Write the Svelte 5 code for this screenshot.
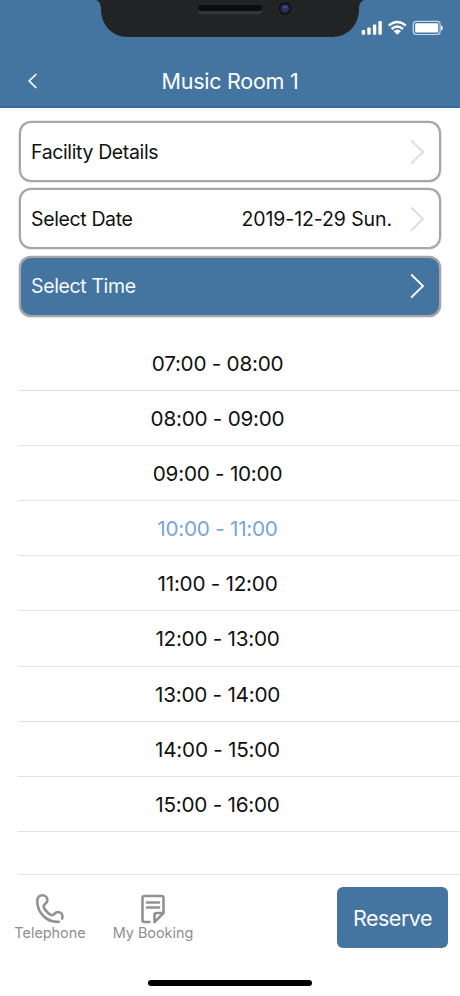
<script>
  let title = 'Music Room 1';
  let sections = [
    { key: 'details', label: 'Facility Details', value: '' },
    { key: 'date', label: 'Select Date', value: '2019-12-29 Sun.' },
    { key: 'time', label: 'Select Time', value: '' }
  ];
  let times = [
    '07:00 - 08:00',
    '08:00 - 09:00',
    '09:00 - 10:00',
    '10:00 - 11:00',
    '11:00 - 12:00',
    '12:00 - 13:00',
    '13:00 - 14:00',
    '14:00 - 15:00',
    '15:00 - 16:00'
  ];
  let activeSection = 'time';
  let selectedTime = '10:00 - 11:00';
</script>

<div class="phone">
  <header>
    <svg class="status" width="460" height="44" viewBox="0 0 460 44">
      <path d="M96 0C99 1 101 4 101 9C101 25 112 37 128 37H332C348 37 359 25 359 9C359 4 361 1 364 0Z" fill="#222324" />
      <rect x="198" y="5.5" width="64" height="9" rx="4" fill="#343536" />
      <rect x="198" y="5" width="64" height="6" rx="3" fill="#0c0d0f" />
      <circle cx="285" cy="9" r="8" fill="#2a2b2c" />
      <circle cx="285" cy="8.5" r="7" fill="#15161c" />
      <circle cx="285" cy="8.5" r="4" fill="#293160" />
      <path d="M282 7.5a3.5 3.5 0 0 1 6 0Z" fill="#4854a0" />
      <g fill="#fff">
        <rect x="361.7" y="30" width="3.4" height="4.7" rx="1" />
        <rect x="367.3" y="27.5" width="3.4" height="7.2" rx="1" />
        <rect x="372.9" y="24.5" width="3.4" height="10.2" rx="1" />
        <rect x="378.4" y="21" width="3.4" height="13.7" rx="1" />
        <path d="M393.6 31Q397.3 28 401 31L397.3 34.8Z" />
        <rect x="415.2" y="23.2" width="23" height="9.4" rx="1.2" />
        <path d="M441 25.5q1.8 .5 1.8 2.5t-1.8 2.5Z" />
      </g>
      <g fill="none" stroke="#fff">
        <path d="M388.8 25.6Q397.3 18.2 405.8 25.6M391.6 29Q397.3 24 403 29" stroke-width="2.4" />
        <rect x="413.3" y="21.3" width="26.8" height="13.2" rx="3" stroke="#c5dcf0" stroke-width="1.2" />
      </g>
    </svg>
    <div class="navbar">
      <button class="back" type="button" aria-label="Back">
        <svg width="10" height="16" viewBox="0 0 10 16"><path d="M8.3 1L1.2 8l7.1 7" /></svg>
      </button>
      <h1>{title}</h1>
    </div>
  </header>

  <main>
    <div class="sections">
      {#each sections as section}
        <button
          type="button"
          class="section {section.key}"
          class:active={activeSection === section.key}
          on:click={() => (activeSection = section.key)}
        >
          <span class="label">{section.label}</span>
          <span class="value">{section.value}</span>
          <svg width="15" height="26" viewBox="0 0 15 26"><path d="M1.2 1.5L13 13L1.2 24.5" /></svg>
        </button>
      {/each}
    </div>

    <ul>
      {#each times as time}
        <li class:selected={selectedTime === time}>
          <button type="button" on:click={() => (selectedTime = time)}>{time}</button>
        </li>
      {/each}
    </ul>
  </main>

  <footer>
    <button class="tool telephone" type="button">
      <svg width="30" height="30" viewBox="0 0 30 30">
        <path d="M23.8 27.8C11.5 28.6 2.2 18.5 2.2 6.8C2.2 3.5 4.3 1.3 7.3 1.3C10.4 1.3 12.4 3.4 12.4 6.2C12.4 9.4 8.6 9.9 8.6 12.3C8.8 15.2 14.6 21.2 17.2 21.3C19.3 21.3 19.4 18 22.9 18C26.2 18 28.4 21 27.2 24.6" />
      </svg>
      <span>Telephone</span>
    </button>
    <button class="tool booking" type="button">
      <svg width="24" height="29" viewBox="0 0 24 29">
        <path d="M8.5 27H3.5Q1.5 27 1.5 25V3Q1.5 1 3.5 1H20.5Q22.5 1 22.5 3V18.2L13.5 27.2V20Q13.5 18 15.5 18H22M6 7.5H18M6 12.5H18" />
      </svg>
      <span>My Booking</span>
    </button>
    <button class="reserve" type="button">Reserve</button>
  </footer>
  <div class="home"></div>
</div>

<style>
  :global(body) {
    margin: 0;
    background: #fff;
  }

  .phone {
    display: flex;
    flex-direction: column;
    width: 460px;
    height: 996px;
    overflow: hidden;
    background: #fff;
    color: #111;
    font-family: Inter, "Liberation Sans", sans-serif;
  }

  button {
    box-sizing: border-box;
    margin: 0;
    padding: 0;
    border: 0;
    background: none;
    color: inherit;
    font: inherit;
    cursor: pointer;
  }

  svg {
    display: block;
    flex: none;
    overflow: visible;
  }

  header {
    box-sizing: border-box;
    height: 108px;
    border-bottom: 2px solid #386b98;
    background: #4475a1;
    color: #fff;
  }

  .navbar {
    display: grid;
    grid-template-columns: 65px 1fr 65px;
    align-items: center;
    box-sizing: border-box;
    height: 62px;
    padding-top: 12px;
  }

  .back {
    display: flex;
    justify-content: center;
    padding: 8px 0;
  }

  .back path {
    fill: none;
    stroke: #fff;
    stroke-width: 1.7;
  }

  h1 {
    margin: 0;
    font-size: 21.5px;
    font-weight: 400;
    line-height: 30px;
    letter-spacing: -0.25px;
    text-align: center;
  }

  main {
    flex: none;
    height: 766px;
  }

  .sections {
    display: flex;
    flex-direction: column;
    gap: 6.4px;
    padding: 13px 19px 0;
  }

  .section {
    display: flex;
    align-items: center;
    height: 61px;
    padding: 0 14px 0 10px;
    border: 2px solid #a6a6a8;
    border-radius: 12px;
    box-shadow: 0 0 0 0.3px #a6a6a8;
    font-size: 19.5px;
    letter-spacing: -0.37px;
    text-align: left;
  }

  .section .value {
    margin-left: auto;
    margin-right: 18px;
    letter-spacing: -0.1px;
  }

  .section path {
    fill: none;
    stroke: #dcdcdc;
    stroke-width: 1.8;
  }

  .section.active {
    background: #4475a1;
    color: #f4faff;
  }

  .section.active path {
    stroke: #fff;
  }

  ul {
    margin: 19px 0 0 18px;
    padding: 0;
    list-style: none;
  }

  li {
    box-sizing: border-box;
    height: 55.15px;
    border-bottom: 1px solid #e2e2e4;
  }

  li button {
    width: 100%;
    height: 54px;
    padding: 1px 43px 0 0;
    font-size: 20.7px;
    letter-spacing: -0.25px;
    text-align: center;
  }

  li.selected {
    color: #74a6da;
  }

  footer {
    display: flex;
    align-items: flex-start;
    box-sizing: border-box;
    height: 106px;
    margin-left: 18px;
    padding: 12px 12px 0 0;
    border-top: 1px solid #e2e2e4;
    color: #8e8e90;
  }

  .tool {
    display: flex;
    flex-direction: column;
    align-items: center;
    justify-content: flex-end;
    height: 55px;
    font-size: 14.4px;
    line-height: 18px;
    white-space: nowrap;
  }

  .tool svg {
    fill: none;
    stroke: #929294;
    stroke-width: 2.6;
    stroke-linecap: round;
    stroke-linejoin: round;
  }

  .telephone {
    width: 72px;
    margin-left: -4px;
  }

  .booking {
    width: 82px;
    margin-left: 26px;
  }

  .reserve {
    width: 111px;
    height: 61px;
    margin-left: auto;
    border-radius: 6px;
    background: #4475a1;
    color: #f8fcff;
    font-size: 21.5px;
    letter-spacing: -0.5px;
  }

  .home {
    flex: none;
    width: 164px;
    height: 6px;
    margin-left: 148px;
    border-radius: 3px;
    background: #000;
  }
</style>
